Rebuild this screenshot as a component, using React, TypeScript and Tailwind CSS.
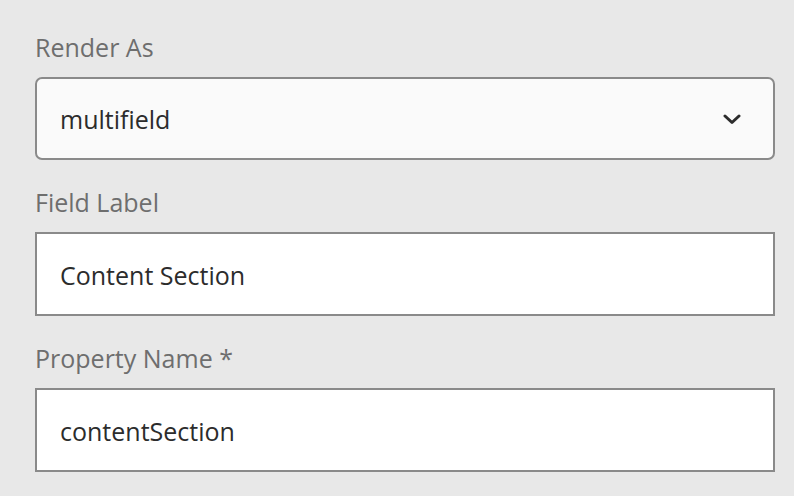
export default function App() {
  const labelCls = "block text-[25px] leading-[32px] text-[#6e6e6e]"
  const fieldCls = "w-full h-[84px] px-[23px] pt-[4px] flex items-center border-2 border-[#8a8a8a] bg-white text-[25px] text-[#2c2c2c]"

  return (
    <div className="w-[794px] h-[496px] overflow-hidden bg-[#e8e8e8] px-[35px] pt-[31px]" style={{ fontFamily: '"Open Sans", "Liberation Sans", sans-serif' }}>
      <div className="w-[740px] flex flex-col">
        {/* Render As */}
        <label className={labelCls}>Render As</label>
        <div className="mt-[14px] w-full h-[83px] pl-[23px] pr-[32px] pt-[2px] flex items-center justify-between rounded-[7px] border-2 border-[#8a8a8a] bg-[#fafafa] text-[25px] text-[#2c2c2c]">
          <span>multifield</span>
          <svg width="18" height="11" viewBox="0 0 18 11" fill="none">
            <path d="M2 2 L9 8.5 L16 2" stroke="#2c2c2c" strokeWidth="3" strokeLinecap="round" strokeLinejoin="round" />
          </svg>
        </div>

        {/* Field Label */}
        <label className={`${labelCls} mt-[26px]`}>Field Label</label>
        <div className={`mt-[14px] ${fieldCls}`}>Content Section</div>

        {/* Property Name */}
        <label className={`${labelCls} mt-[26px]`}>Property Name *</label>
        <div className={`mt-[14px] ${fieldCls}`}>contentSection</div>
      </div>
    </div>
  )
}
